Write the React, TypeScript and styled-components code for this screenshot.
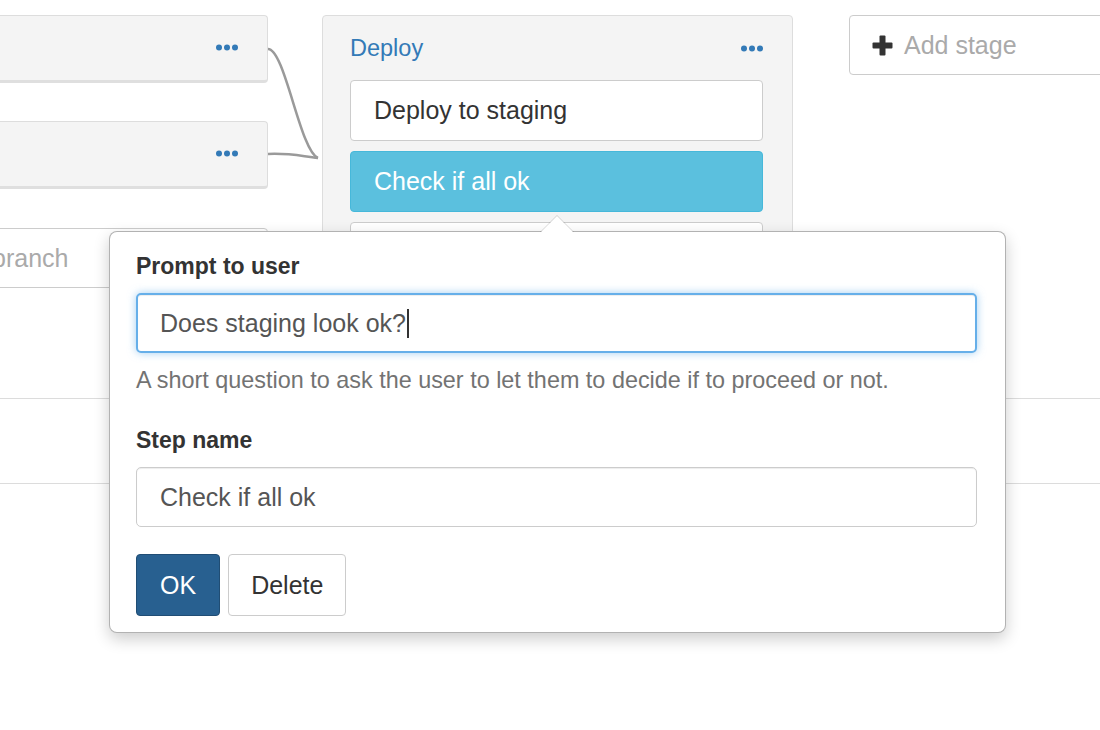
import React from "react";
import styled, { createGlobalStyle, css } from "styled-components";

const GlobalStyle = createGlobalStyle`
  html, body {
    margin: 0;
    padding: 0;
    background: #fff;
  }
  body {
    font-family: "Liberation Sans", Arial, sans-serif;
    color: #333;
    -webkit-font-smoothing: antialiased;
  }
  * { box-sizing: border-box; }
`;

const Page = styled.div`
  position: relative;
  width: 1100px;
  height: 730px;
  overflow: hidden;
  background: #fff;
`;

const PipelineRow = styled.div`
  display: flex;
  align-items: flex-start;
  height: 398px;
  padding-top: 15px;
`;

const BranchColumn = styled.div`
  flex-shrink: 0;
  width: 300px;
  margin-left: -32px;
  display: flex;
  flex-direction: column;
  gap: 38px;
`;

const StageCard = styled.div`
  height: 68px;
  display: flex;
  align-items: center;
  justify-content: flex-end;
  padding: 0 29px 2px 0;
  background: #f4f4f4;
  border: 1px solid #dddddd;
  border-bottom: 3px solid #dfdfdf;
  border-radius: 4px;
`;

const BranchInput = styled.div`
  height: 60px;
  margin-top: 1px;
  display: flex;
  align-items: center;
  padding-left: 23px;
  background: #fff;
  border: 1px solid #cccccc;
  border-radius: 4px;
  font-size: 25px;
  color: #aaaaaa;
`;

const Connectors = styled.div`
  flex-shrink: 0;
  width: 54px;
  svg { display: block; }
`;

const Stage = styled.div`
  flex-shrink: 0;
  width: 471px;
  background: #f4f4f4;
  border: 1px solid #dddddd;
  border-radius: 4px;
  padding: 14px 29px 20px 27px;
`;

const StageHeader = styled.div`
  height: 36px;
  margin-bottom: 14px;
  display: flex;
  align-items: center;
  justify-content: space-between;
`;

const StageTitle = styled.span`
  font-size: 23.5px;
  color: #337ab7;
`;

const StepList = styled.div`
  display: flex;
  flex-direction: column;
  gap: 10px;
`;

const Step = styled.div<{ $active?: boolean }>`
  height: 61px;
  display: flex;
  align-items: center;
  padding-left: 23px;
  font-size: 25px;
  border-radius: 4px;
  border: 1px solid #cccccc;
  background: #fff;
  color: #333;
  ${(p) =>
    p.$active &&
    css`
      background: #5bc0de;
      border-color: #46b8da;
      color: #fff;
    `}
`;

const AddStage = styled.div`
  flex-shrink: 0;
  width: 300px;
  height: 60px;
  margin-left: 56px;
  display: flex;
  align-items: center;
  gap: 10px;
  padding-left: 21px;
  border: 1px solid #cccccc;
  border-radius: 4px;
  background: #fff;
  font-size: 25px;
  color: #aaaaaa;
`;

const Band = styled.div`
  height: 86px;
  border-top: 1px solid #dcdcdc;
  border-bottom: 1px solid #dcdcdc;
`;

const Popover = styled.div`
  position: absolute;
  left: 109px;
  top: 231px;
  width: 897px;
  background: #fff;
  border: 1px solid rgba(0, 0, 0, 0.3);
  border-radius: 8px;
  box-shadow: 0 6px 16px rgba(0, 0, 0, 0.2);
  padding: 19px 28px 16px 26px;

  &::before,
  &::after {
    content: "";
    position: absolute;
    width: 0;
    height: 0;
    border-style: solid;
    border-color: transparent;
  }
  &::before {
    top: -17px;
    left: 430px;
    border-width: 0 17px 17px 17px;
    border-bottom-color: rgba(0, 0, 0, 0.14);
  }
  &::after {
    top: -16px;
    left: 431px;
    border-width: 0 16px 16px 16px;
    border-bottom-color: #fff;
  }
`;

const Label = styled.div`
  font-weight: bold;
  font-size: 23px;
  line-height: 30px;
  color: #333;
  margin-bottom: 12px;
`;

const Field = styled.div<{ $focused?: boolean }>`
  height: 60px;
  display: flex;
  align-items: center;
  padding: 0 23px;
  font-size: 25px;
  color: #555;
  background: #fff;
  border: 1px solid #cccccc;
  border-radius: 5px;
  box-shadow: inset 0 1px 1px rgba(0, 0, 0, 0.075);
  ${(p) =>
    p.$focused &&
    css`
      border: 2px solid #66afe9;
      padding: 0 22px;
      box-shadow: inset 0 1px 1px rgba(0, 0, 0, 0.075),
        0 0 8px rgba(102, 175, 233, 0.6);
    `}
`;

const Caret = styled.span`
  display: inline-block;
  width: 2px;
  height: 29px;
  margin-left: 1px;
  background: #333;
`;

const Help = styled.div`
  margin-top: 12px;
  margin-bottom: 30px;
  font-size: 23.4px;
  line-height: 30px;
  color: #737373;
`;

const FieldGroup = styled.div``;

const ButtonRow = styled.div`
  margin-top: 27px;
  display: flex;
  gap: 8px;
`;

const Button = styled.button<{ $primary?: boolean }>`
  height: 62px;
  padding: 0 22px;
  font-family: inherit;
  font-size: 25px;
  border-radius: 4px;
  border: 1px solid #cccccc;
  background: #fff;
  color: #333;
  cursor: pointer;
  ${(p) =>
    p.$primary &&
    css`
      padding: 0 23px;
      background: #286090;
      border-color: #204d74;
      color: #fff;
    `}
`;

const Dots = () => (
  <svg width="22" height="7" viewBox="0 0 22 7" aria-hidden="true">
    <circle cx="3" cy="3.5" r="3" fill="#337ab7" />
    <circle cx="11" cy="3.5" r="3" fill="#337ab7" />
    <circle cx="19" cy="3.5" r="3" fill="#337ab7" />
  </svg>
);

const PlusIcon = () => (
  <svg width="23" height="21" viewBox="0 0 23 21" aria-hidden="true">
    <rect x="8.5" y="0.5" width="6" height="20" rx="1" fill="#333" />
    <rect x="1.5" y="7.5" width="20" height="6" rx="1" fill="#333" />
  </svg>
);

export default function App() {
  return (
    <>
      <GlobalStyle />
      <Page>
        <PipelineRow>
          <BranchColumn>
            <StageCard>
              <Dots />
            </StageCard>
            <StageCard>
              <Dots />
            </StageCard>
            <BranchInput>branch</BranchInput>
          </BranchColumn>
          <Connectors>
            <svg width="54" height="200" viewBox="0 0 54 200" aria-hidden="true">
              <path
                d="M0 34 C17 34 32 136 50 143"
                fill="none"
                stroke="#9a9a9a"
                strokeWidth="2.5"
              />
              <path
                d="M0 139 C22 138 32 141 50 143"
                fill="none"
                stroke="#9a9a9a"
                strokeWidth="2.5"
              />
            </svg>
          </Connectors>
          <Stage>
            <StageHeader>
              <StageTitle>Deploy</StageTitle>
              <Dots />
            </StageHeader>
            <StepList>
              <Step>Deploy to staging</Step>
              <Step $active>Check if all ok</Step>
              <Step>Deploy to production</Step>
            </StepList>
          </Stage>
          <AddStage>
            <PlusIcon />
            <span>Add stage</span>
          </AddStage>
        </PipelineRow>
        <Band />
        <Popover>
          <FieldGroup>
            <Label>Prompt to user</Label>
            <Field $focused>
              <span>Does staging look ok?</span>
              <Caret />
            </Field>
            <Help>A short question to ask the user to let them to decide if to proceed or not.</Help>
          </FieldGroup>
          <FieldGroup>
            <Label>Step name</Label>
            <Field>Check if all ok</Field>
          </FieldGroup>
          <ButtonRow>
            <Button $primary>OK</Button>
            <Button>Delete</Button>
          </ButtonRow>
        </Popover>
      </Page>
    </>
  );
}
